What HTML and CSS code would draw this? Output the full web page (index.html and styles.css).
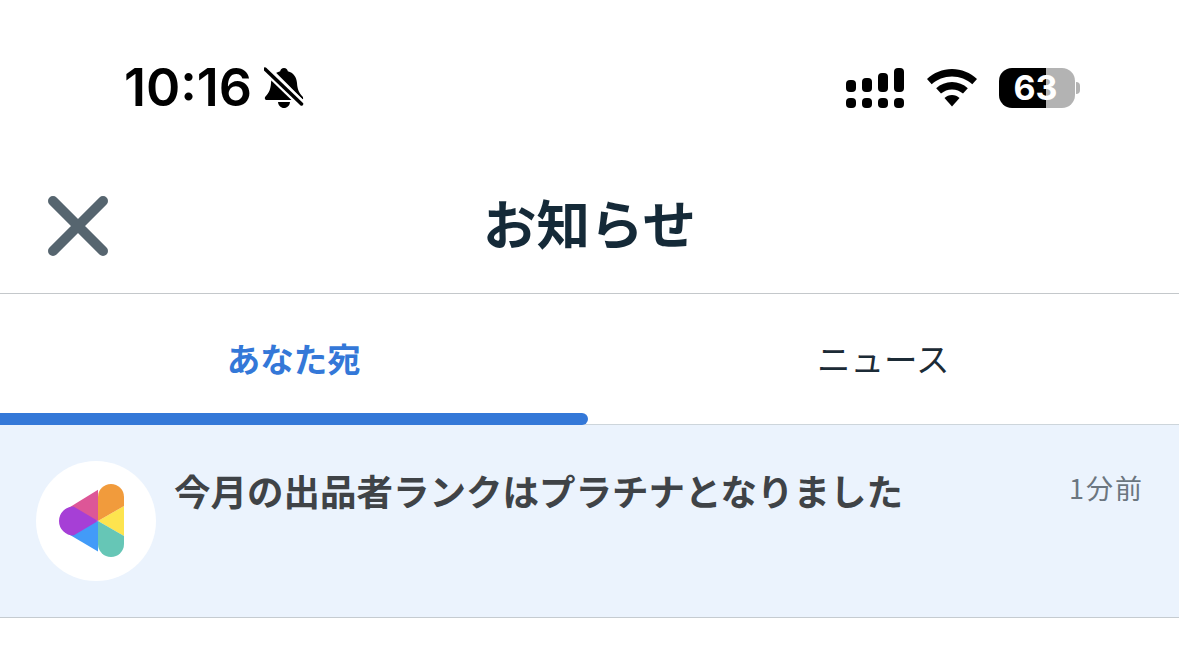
FILE: index.html
```html
<!DOCTYPE html>
<html lang="ja">
<head>
  <meta charset="UTF-8" />
  <meta name="viewport" content="width=device-width, initial-scale=1.0" />
  <title>お知らせ</title>
  <link rel="stylesheet" href="styles.css">
</head>
<body>

  <div class="status-bar">
    <div class="status-left">
      <span class="clock">10:16</span>
      <svg class="bell" width="40" height="42" viewBox="0 0 40 42">
        <path d="M20 1c2.200 0 3.600 1.400 3.800 3.300C29.500 5.700 32.500 10 33 16c.4 6 1.600 9.500 5.500 13.500 1.300 1.400.6 3.500-1.300 3.500H2.800c-1.900 0-2.600-2.100-1.300-3.500C5.400 25.500 6.600 22 7 16c.5-6 3.500-10.300 9.200-11.700C16.400 2.400 17.800 1 20 1z" fill="#000"/>
        <path d="M14 35h12c-.3 3.500-2.800 6-6 6s-5.700-2.500-6-6z" fill="#000"/>
        <path d="M3.500 0l36 36" stroke="#fff" stroke-width="4"/>
        <path d="M1 2l36.500 35" stroke="#fff" stroke-width="8"/>
        <path d="M1 2l36.500 35" stroke="#000" stroke-width="3.500" stroke-linecap="round"/>
      </svg>
    </div>
    <div class="status-right">
      <svg class="signal" width="58" height="40" viewBox="0 0 58 40" fill="#000">
        <rect x="0" y="12" width="10" height="12" rx="4"/>
        <rect x="16" y="10" width="10" height="14" rx="4"/>
        <rect x="32" y="5" width="10" height="19" rx="4"/>
        <rect x="48" y="0" width="10" height="24" rx="4"/>
        <rect x="0" y="30" width="10" height="10" rx="4"/>
        <rect x="16" y="30" width="10" height="10" rx="4"/>
        <rect x="32" y="30" width="10" height="10" rx="4"/>
        <rect x="48" y="30" width="10" height="10" rx="4"/>
      </svg>
      <svg width="50" height="38" viewBox="0 0 50 38" fill="#000">
        <path d="M25 0c9.500 0 18.300 3.700 25 10l-4.700 5.300C39.900 10.300 32.800 7.400 25 7.400S10.100 10.300 4.700 15.300L0 10C6.700 3.700 15.500 0 25 0z"/>
        <path d="M25 13c6 0 11.500 2.300 15.800 6.200l-4.800 5.400c-3-2.700-6.800-4.200-11-4.200s-8 1.500-11 4.200l-4.800-5.400C13.500 15.300 19 13 25 13z"/>
        <path d="M25 26c2.900 0 5.500 1 7.500 2.900L25 37.500l-7.500-8.600C19.500 27 22.100 26 25 26z"/>
      </svg>
      <div class="battery">
        <div class="battery-body">63</div>
        <div class="battery-nub"></div>
      </div>
    </div>
  </div>

  <div class="header">
    <svg class="close-btn" width="60" height="60" viewBox="0 0 60 60">
      <path d="M5 5l50 50M55 5L5 55" stroke="#56656f" stroke-width="10" stroke-linecap="round"/>
    </svg>
    <h1 class="title">お知らせ</h1>
  </div>

  <div class="tabs">
    <div class="tab active">あなた宛</div>
    <div class="tab">ニュース</div>
  </div>

  <div class="notice">
    <div class="avatar">
      <svg width="120" height="120" viewBox="0 0 120 120">
        <path d="M62 60V90.600L29.400 71.200z" fill="#429bf8"/>
        <path d="M62 60L29.200 48.900 62 28.700z" fill="#dd5697"/>
        <path d="M62 60L88 45V75z" fill="#fde44f"/>
        <path d="M62 60L88 75V83A13 13 0 0 1 62 83z" fill="#66c6b6"/>
        <path d="M62 60V36A13 13 0 0 1 88 36V45z" fill="#f19b3c"/>
        <path d="M62 60L37.500 45.500A14.500 14.500 0 0 0 37.500 74.500z" fill="#a63fd6"/>
      </svg>
    </div>
    <div class="notice-text">今月の出品者ランクはプラチナとなりました</div>
    <div class="notice-time">1分前</div>
  </div>

</body>
</html>
```

FILE: styles.css
```css
body {
  font-family: "Noto Sans CJK JP", "Noto Sans", sans-serif;
  background-color: #fff;
  margin: 0;
  padding: 0;
}
.status-bar {
  display: flex;
  justify-content: space-between;
  align-items: center;
  height: 176px;
  padding: 0 99px 0 124px;
}
.status-left {
  display: flex;
  align-items: center;
  gap: 12px;
}
.clock {
  font-family: Inter, sans-serif;
  font-size: 52px;
  font-weight: 600;
  line-height: 1;
  color: #000;
}
.status-right {
  display: flex;
  align-items: center;
  gap: 22px;
}
.signal {
  margin-right: 1px;
}
.battery {
  display: flex;
  align-items: center;
  gap: 1px;
}
.battery-body {
  width: 76px;
  height: 40px;
  padding-right: 3px;
  box-sizing: border-box;
  border-radius: 13px;
  background: linear-gradient(to right, #000 62%, #b3b3b3 62%);
  color: #fff;
  font-family: Inter, sans-serif;
  font-size: 34px;
  font-weight: 700;
  line-height: 40px;
  text-align: center;
}
.battery-nub {
  width: 4px;
  height: 12px;
  border-radius: 0 6px 6px 0;
  background-color: #b3b3b3;
}
.header {
  display: flex;
  align-items: center;
  justify-content: center;
  position: relative;
  height: 117px;
  border-bottom: 1px solid #c4c8cb;
}
.close-btn {
  position: absolute;
  left: 48px;
  top: 20px;
}
.title {
  margin: 0 0 25px;
  font-size: 53.500px;
  font-weight: 700;
  line-height: 1.2;
  color: #152a38;
}
.tabs {
  display: flex;
  height: 130px;
  border-bottom: 1px solid #cdd5db;
}
.tab {
  position: relative;
  flex: 1;
  padding: 40px 2px 0 0;
  box-sizing: border-box;
  text-align: center;
  font-size: 33.500px;
  line-height: 48px;
  color: #1c2b36;
}
.tab.active {
  font-weight: 700;
  color: #3478d8;
}
.tab.active::after {
  content: "";
  position: absolute;
  left: 0;
  right: 2px;
  bottom: -1px;
  height: 12px;
  border-radius: 0 6px 6px 0;
  background-color: #3478d8;
}
.notice {
  display: flex;
  align-items: flex-start;
  height: 193px;
  padding: 36px 37px 0 36px;
  box-sizing: border-box;
  background-color: #ebf3fd;
  border-bottom: 1px solid #c5cbd0;
}
.avatar {
  width: 120px;
  height: 120px;
  border-radius: 50%;
  background-color: #fff;
  flex-shrink: 0;
}
.avatar svg {
  display: block;
}
.notice-text {
  flex: 1;
  margin-left: 18px;
  padding-top: 3px;
  font-size: 36.500px;
  font-weight: 700;
  line-height: 54px;
  white-space: nowrap;
  color: #3f4347;
}
.notice-time {
  font-size: 27px;
  letter-spacing: 2px;
  margin-right: -2px;
  line-height: 54px;
  color: #6b7680;
}
```
